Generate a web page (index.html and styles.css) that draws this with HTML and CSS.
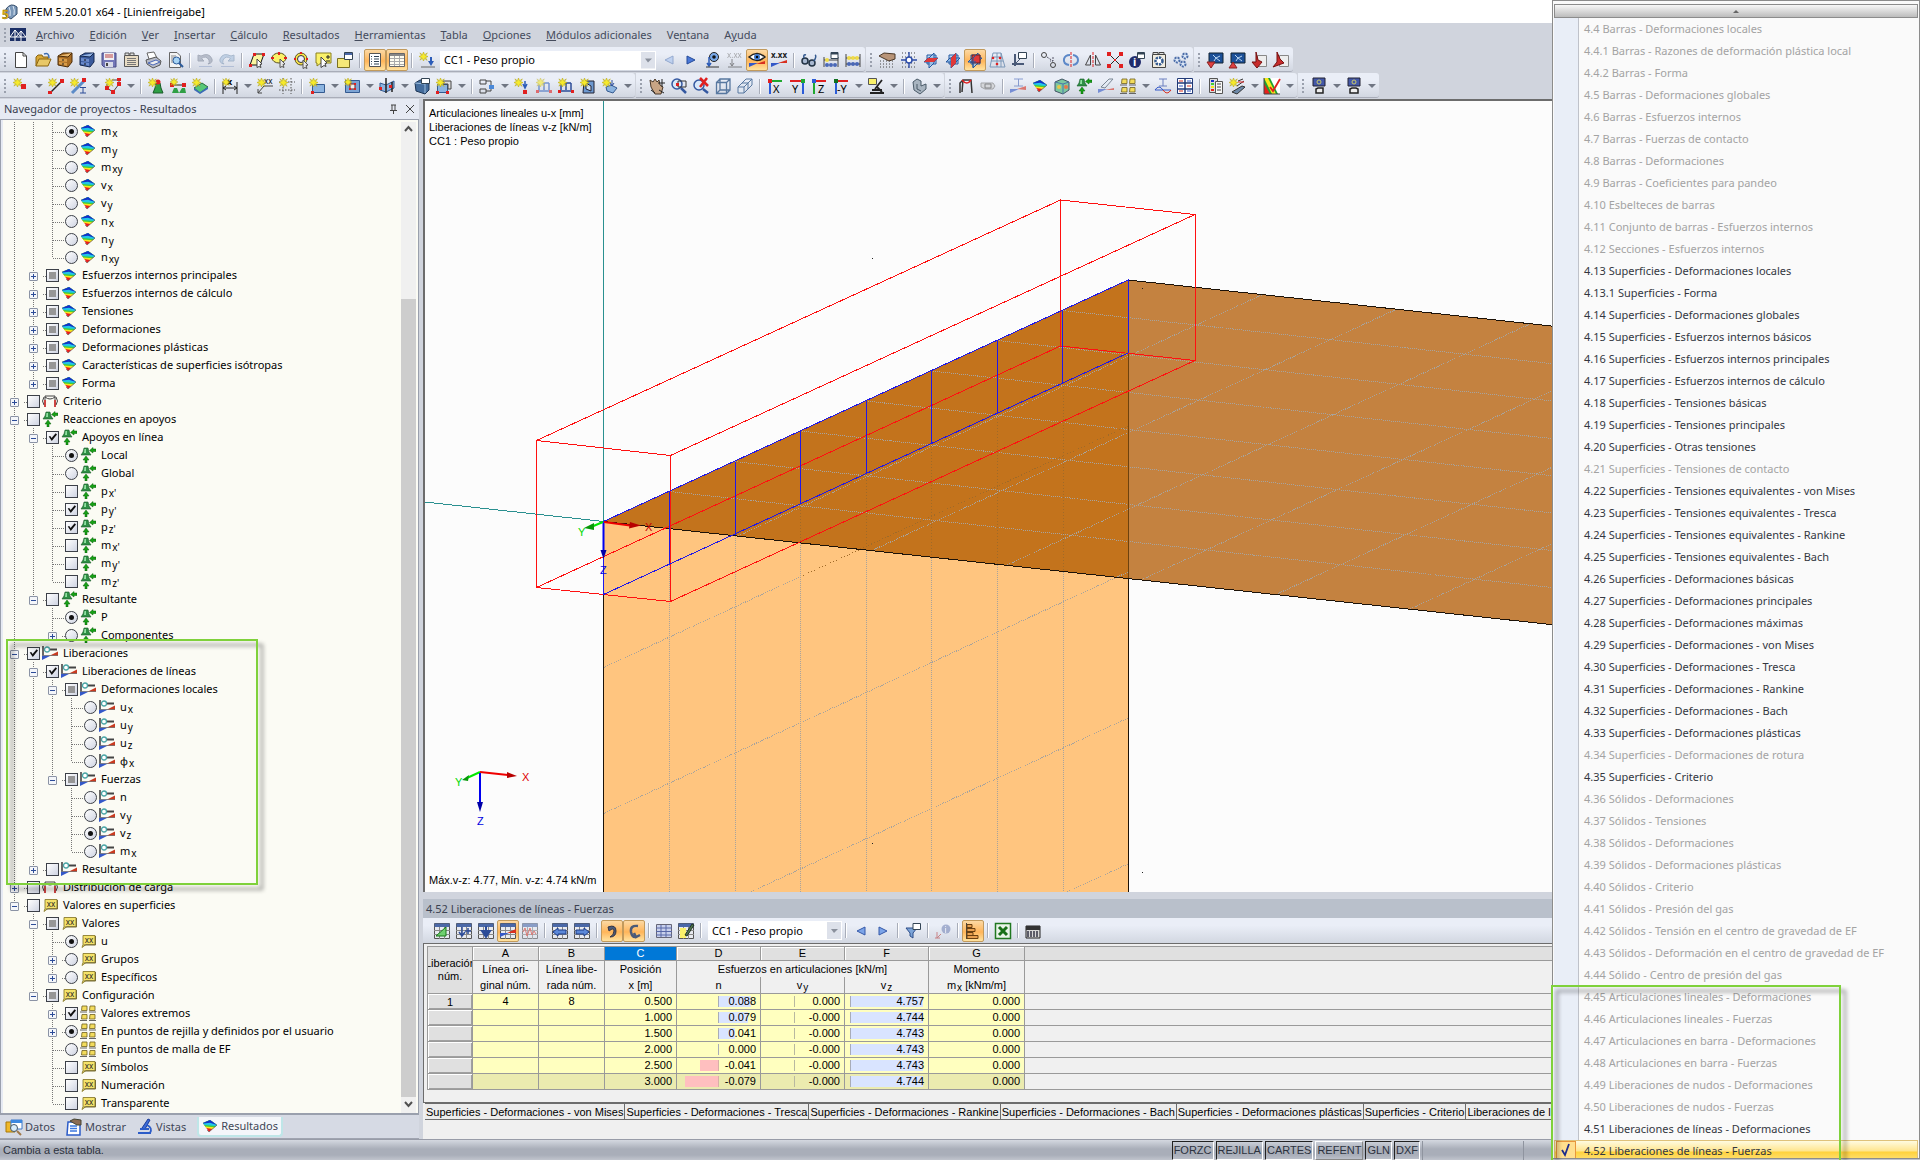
FILE: index.html
```html
<!DOCTYPE html>
<html lang="es">
<head>
<meta charset="utf-8">
<title>RFEM 5.20.01 x64 - [Linienfreigabe]</title>
<link rel="stylesheet" href="styles.css">
</head>
<body>
<svg class="defs" aria-hidden="true">
  <symbol id="star" viewBox="0 0 8 8"><path d="M4 0L5 2.4 7.4 .8 5.8 3.2 8 4 5.8 5 7.2 7.4 5 5.8 4 8 3 5.8 .8 7.2 2.2 5 0 4 2.2 3 .8 .8 3 2.4z" fill="#f6ea2c" stroke="#b5a51a" stroke-width=".5"/></symbol>
  <symbol id="surf" viewBox="0 0 16 14"><path d="M1 4L8 1 15 6 7 13z" fill="#e8201c"/><path d="M1 4L8 1 15 6 10.500 10 4.200 9z" fill="#f8e71c"/><path d="M1 4L8 1 15 6 12.500 8.200 3.200 7.400z" fill="#3ecf3a"/><path d="M1 4L8 1 15 6 14 7 2.300 6z" fill="#21c5e8"/><path d="M1 4L8 1 15 6 8 3.800 1.400 4.600z" fill="#1430c8"/><path d="M5 11L7 13 15 6" fill="none" stroke="#555" stroke-width=".6"/></symbol>
  <symbol id="crit" viewBox="0 0 16 16"><path d="M3 14V3h10v11M3 4q5 4 10 0" class="k"/><path d="M2 4Q-1 8 2 12M14 4q3 4 0 8" class="k"/><path d="M3 7v7M13 7v7" stroke="#e02020" stroke-width="1.400"/></symbol>
  <symbol id="sup" viewBox="0 0 16 16"><path d="M4 1h4l1 4 2 3H1l2-3z" fill="#2f8f45" stroke="#1a5a2a" stroke-width=".6"/><path d="M4.500 2h1.500v4H4z" fill="#8fe0a0"/><path d="M5 16v-3H3l3-4 3 4H7v3zM16 2h-3V.5L9.500 3.500 13 6V4.500h3z" fill="#16a016" stroke="#0a600a" stroke-width=".5"/></symbol>
  <symbol id="lib" viewBox="0 0 16 16"><path d="M1 1v10" stroke="#444" stroke-width="1.600"/><path d="M8 4.500h7" stroke="#444" stroke-width="2"/><circle cx="5" cy="4.500" r="2.500" fill="#fff" stroke="#4aa5a5" stroke-width="1.300"/><path d="M0 10.500h9L0 15z" fill="#3458c8"/><path d="M7 11l9-4.500V11z" fill="#c83a20"/><path d="M0 10.500h16" stroke="#777" stroke-width=".8"/></symbol>
  <symbol id="val" viewBox="0 0 16 16"><path d="M3 2.500h12v9H6l-4 3 1-3z" fill="#f5e36a" stroke="#8b7d30" stroke-width=".9"/><path d="M3.500 12H15.500V3" fill="none" stroke="#776c35"/><text x="9" y="9.500" font-size="8" text-anchor="middle" fill="#222">xx</text></symbol>
  <symbol id="ext" viewBox="0 0 16 16"><g fill="#f3dc5c" stroke="#6e5f20" stroke-width=".8"><path d="M2 1h5v4.500H1.500z"/><path d="M10 1h5v4.500H9.500z"/><path d="M2 9.500h5V14H1.500z"/><path d="M10 9.500h5V14H9.500z"/></g><path d="M0 7h7M9 7h7M0 15.500h7M9 15.500h7" stroke="#666"/></symbol>
  <symbol id="grid" viewBox="0 0 16 16"><path d="M.5.500h15v15H.5z" fill="#e8eaf0" stroke="#555"/><path d="M.5.500h15V4H.5z" fill="#4a68a8"/><path d="M5.500 4v12M10.500 4v12M0 7.500h16M0 11.500h16" stroke="#888"/></symbol>
  <symbol id="planes" viewBox="0 0 16 16"><path d="M4 3h9v9H4z" fill="#bcd8f4" stroke="#2458a0"/><path d="M1 10l4-4h10l-4 4z" fill="#8ebcec" stroke="#2458a0"/><path d="M6 16V6l5-5v10z" fill="#a8ccf0" fill-opacity=".7" stroke="#2458a0"/></symbol>
</svg>

<div class="app">
  <header class="title">
    <svg class="i"><path d="M4 5Q9-2 15 3v7l-6 5-5-3z" fill="#7a97b8" stroke="#37506e"/><path d="M7 3q2 4 1 9M11 2q2 4 1 9" fill="none" stroke="#dce8f4"/><text x="0" y="15" font-size="12" font-weight="bold" fill="#e8b818" stroke="#7d6000" stroke-width=".4">5</text></svg>
    <h1>RFEM 5.20.01 x64 - [Linienfreigabe]</h1>
  </header>

  <nav class="menu">
    <span class="grip"></span>
    <svg class="i"><path d="M0 0h16v13H0z" fill="#1c2f66"/><path d="M0 9h16M5 13V2L0 9M5 2l6 7M11 13V3L6 9M11 3l5 6" fill="none" stroke="#fff"/></svg>
    <a href="#"><u>A</u>rchivo</a><a href="#"><u>E</u>dición</a><a href="#"><u>V</u>er</a><a href="#"><u>I</u>nsertar</a><a href="#"><u>C</u>álculo</a><a href="#"><u>R</u>esultados</a><a href="#"><u>H</u>erramientas</a><a href="#"><u>T</u>abla</a><a href="#"><u>O</u>pciones</a><a href="#"><u>M</u>ódulos adicionales</a><a href="#">Ve<u>n</u>tana</a><a href="#">A<u>y</u>uda</a>
  </nav>

  <div class="bars">
    <div class="barrow">
      <div class="bar"><span class="grip"></span>
        <button><svg><path d="M2.500.500H10L13.500 4v11.500h-11z" fill="#fff" stroke="#444"/><path d="M10 .5V4h3.500" class="k"/></svg></button>
        <button><svg><path d="M1 14V5l2-2h4l1 2h5v3" fill="#d8a838" stroke="#8a6410"/><path d="M1 14l3-7h12l-3 7z" fill="#e8c868" stroke="#8a6410"/><path d="M9 2q5-2 5 4" fill="none" stroke="#3c6cb0" stroke-width="1.500"/></svg></button>
        <button><svg><path d="M1 4l5-3h9v9l-4 5-10-2z" fill="#a86c24" stroke="#4c2c08"/><path d="M1 4l10 1 4-4" fill="#e8b870" stroke="#4c2c08"/><path d="M2 6l8 1v3L2 9zM2 10l8 1v3l-8-2z" fill="#d89c48"/><path d="M5 8h2M5 12h2" stroke="#222"/></svg></button>
        <button><svg><path d="M1 4l5-3h9v9l-4 5-10-2z" fill="#3a5a9c" stroke="#142850"/><path d="M1 4l10 1 4-4" fill="#94b4e4" stroke="#142850"/><path d="M2 6l8 1v3L2 9zM2 10l8 1v3l-8-2z" fill="#6c8ccc"/><path d="M5 8h2M5 12h2" stroke="#111"/></svg></button>
        <button><svg><path d="M1 1h14v14H3l-2-2z" fill="#7478b8" stroke="#4a4c88"/><path d="M3 1h10v7H3z" fill="#f0f0f4"/><path d="M4 10h8v5H4z" fill="#d8dae8"/><path d="M5 11h2v3H5z" fill="#444"/><path d="M4 3h8M4 5h8" stroke="#b44"/></svg></button>
        <button><svg><path d="M1.500 3.500h14v11h-14z" fill="#e8dcc4" stroke="#555"/><path d="M2 3V1h4v2M7 3V1h4v2" fill="#ddd" stroke="#555"/><path d="M4 6.500h9M4 8.500h9M4 10.500h9M4 12.500h9" stroke="#777"/></svg></button>
        <button><svg><path d="M4 7L2 1l7-1 3 6" fill="#fff" stroke="#666"/><path d="M1 8l10-3 5 4-1 4-7 3-6-4z" fill="#b8bcc8" stroke="#555"/><path d="M3 11l8-3 4 2-7 3z" fill="#eee" stroke="#4a68b8"/></svg></button>
        <button><svg><path d="M2.500.500H10L13.500 4v11.500h-11z" fill="#f4f4f4" stroke="#666"/><path d="M4 4h5M4 6h4M4 8h3M4 10h3" stroke="#888"/><circle cx="9.500" cy="8.500" r="3.500" fill="#a8d4f4" stroke="#2c5c9c"/><path d="M12 11l4 4" stroke="#2c5c9c" stroke-width="2"/></svg></button>
        <i class="sep"></i>
        <button><svg class="dim"><path d="M1 3v6h6L4.500 6.500Q9 3 12 8q1 3-1 4 5-1 4-5Q12 0 4 4z" fill="#98a0b0" stroke="#7c8496"/><path d="M2 14.500h13" stroke="#9ac"/></svg></button>
        <button><svg class="dim"><path d="M15 3v6H9l2.500-2.500Q7 3 4 8q-1 3 1 4-5-1-4-5Q4 0 12 4z" fill="#a8c0dc" stroke="#8098b4"/><path d="M2 14.500h13" stroke="#9ac"/></svg></button>
        <i class="sep"></i>
        <button><svg><path d="M1 13L5 2h10l-4 11z" fill="#fbf6a0" stroke="#111"/><path d="M0 12h3v3H0zM4 1h3v3H4zM13 1h3v3h-3z" fill="#e02020"/><path d="M8 7l5 5-2 .5 1 3-2-1-2 1z" fill="#fff" stroke="#444"/></svg></button>
        <button><svg><ellipse cx="8" cy="6" rx="7" ry="5" fill="#fbf26a" stroke="#5a5220"/><path d="M0 6h3M13 6h3M8 0v3" stroke="#e02020" stroke-width="2"/><path d="M9 7l5 5-2 .5 1 3-2-1-2 1z" fill="#e8e8e8" stroke="#555"/></svg></button>
        <button><svg><circle cx="8" cy="7" r="6" fill="#fbe64a" stroke="#5a5220"/><circle cx="8" cy="7" r="3.500" fill="#eef" stroke="#333"/><path d="M7 0h2v2H7zM1 6h2v2H1zM13 6h2v2h-2z" fill="#e02020"/><path d="M10 8l5 5-2 .5 1 3-2-1-2 1z" fill="#e8e8e8" stroke="#555"/></svg></button>
        <button><svg><path d="M1 1h15v10H6l-4 3V11H1z" fill="#fbf26a" stroke="#8a8020"/><path d="M6 5l6 6-2 .5 1 3-2-1-3 2z" fill="#fff" stroke="#444"/><path d="M11 5h4M13 3v4M11 9h4" stroke="#222"/></svg></button>
        <button><svg><path d="M.5 6.500h12v9H.5z" fill="#f5e878" stroke="#7a7020"/><path d="M7.500.500h8v7h-8z" fill="#fff" stroke="#345"/><path d="M8 1h7v2H8z" fill="#4a68a8"/></svg></button>
        <i class="sep"></i>
        <button class="on"><svg><path d="M2.500 1.500h11v13h-11z" fill="#fff" stroke="#555"/><path d="M4 4.500h1M7 4.500h5M4 7h1M7 7h5M4 9.500h1M7 9.500h5M4 12h1M7 12h5" stroke="#345"/></svg></button>
        <button class="on"><svg><path d="M.5 1.500h15v13H.5z" fill="#fffdf0" stroke="#666"/><path d="M1 2h14v2H1z" fill="#888"/><path d="M5.500 4v10M10.500 4v10M1 6.500h14M1 9.500h14M1 12.500h14" stroke="#aaa"/></svg></button>
        <i class="sep"></i>
        <button><svg><use href="#star" width="9" height="9"/><path d="M12 5v7" stroke="#2c5cb8" stroke-width="2"/><path d="M9 9l3 5 3-5z" fill="#2c5cb8"/><path d="M2 15h14" stroke="#666"/></svg></button>
        <label class="combo wide"><select aria-label="Caso de carga"><option>CC1 - Peso propio</option></select></label>
        <button><svg class="dim"><path d="M12 4v8L4 8z" fill="#a8c4f0" stroke="#6080b8"/></svg></button>
        <button><svg><path d="M4 4v8l8-4z" fill="#4a78d8" stroke="#244a98"/></svg></button>
        <button><svg><circle cx="9" cy="5" r="4.500" fill="#78a8e8" stroke="#222"/><circle cx="9" cy="5" r="1.800" fill="#111"/><path d="M4 5v9M2 11l2 3 2-3" stroke="#2c5cb8" stroke-width="1.500" fill="none"/><path d="M1 15h13" stroke="#333"/></svg></button>
        <button><svg class="dim"><text x="0" y="6" font-size="8" fill="#777">x.xx</text><path d="M5 7v7M3 11l2 3 2-3M1 15h14" class="k"/></svg></button>
        <button class="on"><svg><path d="M0 5q8-7 16 0-8 7-16 0z" fill="#fff" stroke="#222" stroke-width="1.500"/><circle cx="8" cy="5" r="3" fill="#3c78d0"/><circle cx="8" cy="5" r="1.200"/><path d="M0 11h9L0 15z" fill="#3458c8"/><path d="M7 12l9-3v3z" fill="#d83020"/></svg></button>
        <button><svg><text x="0" y="6" font-size="8" font-weight="bold" fill="#222">x.xx</text><path d="M0 11h9L0 15z" fill="#3458c8"/><path d="M7 11l9-3v3z" fill="#d83020"/></svg></button>
        <i class="sep"></i>
        <button><svg><circle cx="4" cy="9" r="3" fill="#a8b8d0" stroke="#234" stroke-width="1.500"/><circle cx="11" cy="11" r="3" fill="#a8b8d0" stroke="#234" stroke-width="1.500"/><path d="M3 6q-1-4 2-3M13 9q3-5 1-6" stroke="#345a90" stroke-width="1.500" fill="none"/></svg></button>
        <button><svg><path d="M1 5v10M15 5v10M1 8h14" class="k"/><circle cx="4" cy="8" r="2" fill="#f0dc48"/><circle cx="4" cy="13" r="2" fill="#4a68b8"/><circle cx="8" cy="13" r="2" fill="#4a68b8"/><circle cx="12" cy="13" r="2" fill="#4a68b8"/><path d="M8 .5h7v6H8z" fill="#fff" stroke="#345"/><path d="M8 1h7v1.500H8z" fill="#345"/></svg></button>
        <button><svg><path d="M1 2v13M15 2v13M1 6h14M1 12h14" class="k"/><circle cx="4" cy="6" r="2" fill="#f0dc48"/><circle cx="8" cy="6" r="2" fill="#f0dc48"/><circle cx="12" cy="6" r="2" fill="#f0dc48"/><circle cx="4" cy="12" r="2" fill="#4a68b8"/><circle cx="8" cy="12" r="2" fill="#4a68b8"/><circle cx="12" cy="12" r="2" fill="#4a68b8"/></svg></button>
      </div>
      <div class="bar"><span class="grip"></span>
        <button><svg><path d="M0 4l5-3 11 1v5l-6 2z" fill="#b89478" stroke="#4a3828"/><path d="M1 9h15M1 12h15M1 15h15" stroke="#444" stroke-dasharray="1 2"/></svg></button>
        <button><svg><path d="M1 1h15M1 5h15M1 11h15M1 15h15" stroke="#444" stroke-dasharray="1 2"/><circle cx="8" cy="8" r="3" fill="#fff" stroke="#2c4ca8" stroke-width="1.500"/><path d="M8 0v5M8 11v5M0 8h5M11 8h5" stroke="#2c4ca8" stroke-width="1.400"/></svg></button>
        <button><svg><use href="#planes"/><path d="M1 10l4-4h10l-4 4z" fill="#e03838"/></svg></button>
        <button><svg><use href="#planes"/><path d="M6 16V6l5-5v10z" fill="#e03838"/></svg></button>
        <button class="on"><svg><use href="#planes"/><path d="M5 3h8v8H5z" fill="#e03838" stroke="#622"/><path d="M3 10h6M6 15V6l3-3" fill="none" stroke="#2458a0"/></svg></button>
        <button><svg><path d="M4 1l8 0 4 14H1zM8 1v14M12 1v14M3 5h10M2 9h12" fill="none" stroke="#7c98b8"/><circle cx="4" cy="6" r="1.300" fill="#e02020"/><circle cx="11" cy="6" r="1.300" fill="#e02020"/><circle cx="8" cy="12" r="1.300" fill="#e02020"/></svg></button>
        <button><svg><path d="M4 2v12M1 12h12" stroke="#4a5a78" stroke-width="2"/><path d="M4 12l7-7" stroke="#4a5a78"/><path d="M7.500.500h8v6h-8z" fill="#fff" stroke="#345"/></svg></button>
        <i class="sep"></i>
        <button><svg><circle cx="3" cy="3" r="2.500" class="k"/><circle cx="12" cy="13" r="2.500" class="k"/><path d="M6 5l6 4M12 5v4H9" stroke="#556" stroke-dasharray="2 1" fill="none"/></svg></button>
        <button><svg><path d="M8 0v16" stroke="#e02020" stroke-dasharray="3 1"/><path d="M6 13Q0 12 1 7q1-4 6-4M10 3q5 1 5 5t-5 5" fill="none" stroke="#5c88c8" stroke-width="2"/></svg></button>
        <button><svg><path d="M8 0v16" stroke="#e02020" stroke-dasharray="3 1"/><path d="M5.500 3v10h-5zM10.500 3v10h5z" class="k"/></svg></button>
        <button><svg><path d="M2 2l12 12M14 2L2 14" stroke="#222"/><path d="M0 0h4v4H0zM12 0h4v4h-4zM0 12h4v4H0zM12 12h4v4h-4zM7 7h2v2H7z" fill="#e02020"/></svg></button>
        <button><svg><circle cx="6" cy="10" r="6" fill="#202c6c"/><text x="4" y="14" font-size="11" font-weight="bold" fill="#fff">i</text><path d="M8.500.500h7v6h-7z" fill="#fff" stroke="#345"/><path d="M9 1h6v1.500H9z" fill="#345"/></svg></button>
        <button><svg><path d="M1.500 2.500h13v13h-13z" fill="#f0ece0" stroke="#444"/><path d="M2 2V.5h5V2M8 2V.5h5V2" fill="#ddd" stroke="#444"/><circle cx="8" cy="9" r="3.500" fill="#fff" stroke="#345a90" stroke-width="2.500" stroke-dasharray="2.200 1"/></svg></button>
        <button><svg><g fill="#dce8f8" stroke="#4a6ca8" stroke-width="2" stroke-dasharray="2 1"><circle cx="4" cy="8" r="2.500"/><circle cx="12" cy="4" r="2.500"/><circle cx="10" cy="12" r="2.500"/></g></svg></button>
      </div>
      <div class="bar"><span class="grip"></span>
        <button><svg><path d="M2 1h14v10H2z" fill="#1c5098" stroke="#123"/><path d="M6 3l3 3 4-2M7 9l2-3 4 3" fill="none" stroke="#bcd8f4"/><path d="M0 10h8l-4 6z" fill="#e04040" stroke="#822"/></svg></button>
        <button><svg><path d="M2 1h14v10H2z" fill="#1c5098" stroke="#123"/><path d="M6 3l3 3 4-2M7 9l2-3 4 3" fill="none" stroke="#bcd8f4"/><path d="M0 16h8l-4-6z" fill="#e04040" stroke="#822"/></svg></button>
        <button><svg><path d="M6.500 3.500h9v11h-9z" fill="#eee" stroke="#888"/><path d="M5 0v10H1l5 6 5-6-4-2z" fill="#c82c2c" stroke="#711"/></svg></button>
        <button><svg><path d="M6.500 3.500h9v11h-9z" fill="#eee" stroke="#888"/><path d="M4 0v10l-4 5 11-4-4-4z" fill="#c82c2c" stroke="#711"/></svg></button>
      </div>
    </div>
    <div class="barrow">
      <div class="bar"><span class="grip"></span>
        <button><svg><use href="#star" width="9" height="9"/><path d="M8 6h5v5H8z" fill="#e02020"/></svg></button><button class="dd"></button>
        <button><svg><path d="M2 15L14 3" stroke="#222" stroke-width="1.500"/><path d="M12 1h4v4h-4zM0 13h4v3H0z" fill="#e02020"/><use href="#star" width="9" height="9"/></svg></button>
        <button><svg><path d="M2 15L14 3" stroke="#5c8cc8" stroke-width="3"/><path d="M12 0h4v4h-4z" fill="#e02020"/><use href="#star" width="9" height="9"/><path d="M10 9.500h6M13 10v5M10 15h6" stroke="#2c4c98"/></svg></button><button class="dd"></button>
        <button><svg><path d="M2 6v4l6 4 6-8V2H7" class="k"/><path d="M0 8h4v4H0zM6 12h4v4H6zM12 4h4v4h-4zM12 0h4v3h-4z" fill="#e02020"/><use href="#star" width="9" height="9"/></svg></button><button class="dd"></button><i class="sep"></i>
        <button><svg><path d="M8 5h4l1 5 2 5H5l2-5z" fill="#2f9f45" stroke="#1a5a2a"/><circle cx="10" cy="4" r="2.500" fill="#e02020"/><use href="#star" width="9" height="9"/></svg></button>
        <button><svg><path d="M2 7h12" stroke="#222"/><path d="M0 5h4v4H0zM12 5h4v4h-4z" fill="#e02020"/><path d="M4 10h3l2 5H2zM12 10h3l1 5H9z" fill="#2f9f45"/><use href="#star" width="8" height="8"/></svg></button>
        <button><svg><path d="M2 10l8-5 6 4-8 6z" fill="#58c878" stroke="#2a6c3c"/><path d="M2 10v2l6 4v-2zM8 14v2l8-5V9z" fill="#3c6cb8"/><use href="#star" width="9" height="9"/></svg></button><i class="sep"></i>
        <button><svg><path d="M1 4v12M15 4v12M1 10h14M4 8l-3 2 3 2M12 8l3 2-3 2" stroke="#222" fill="none"/><text x="5" y="7" font-size="9" font-weight="bold">x</text><use href="#star" width="8" height="8"/></svg></button><button class="dd"></button>
        <button><svg><path d="M1 15l6-7h9M1 15v-4M1 15h4" class="k"/><text x="7" y="6" font-size="8">xx</text><use href="#star" width="9" height="9"/></svg></button>
        <button><svg><path d="M4 0v16M12 0v16M0 4h16M0 12h16" stroke="#555" stroke-dasharray="1.500 1.500"/><use href="#star" width="9" height="9"/></svg></button><i class="sep"></i>
        <button><svg><path d="M3.500 6.500h12v8h-12z" fill="#8cb4e0" stroke="#345a90"/><path d="M2 13h3v3H2z" fill="#e02020"/><use href="#star" width="9" height="9"/></svg></button><button class="dd"></button>
        <button><svg><path d="M1.500 2.500h14v12h-14z" fill="#7ca4d4" stroke="#345a90"/><path d="M6 6h5v5H6z" fill="#eee" stroke="#622"/><path d="M5 5h2v2H5zM10 5h2v2h-2zM5 10h2v2H5zM10 10h2v2h-2z" fill="#e02020"/><use href="#star" width="8" height="8"/></svg></button><button class="dd"></button>
        <button><svg><path d="M1 5l6 2 8-4v7l-8 4-6-2z" fill="#8cb4e0" stroke="#345a90"/><path d="M7 0v15M13 4v10" stroke="#222" stroke-width="1.500"/><path d="M0 9h3v3H0zM10 7h3v3h-3z" fill="#e02020"/></svg></button><button class="dd"></button>
        <button><svg><path d="M1 5l5-3h9v10l-4 4-9-3z" fill="#446c9c" stroke="#1c3454"/><path d="M1 5l10 1v9" fill="none" stroke="#9cbcdc"/><path d="M7.500.500h8v5h-8z" fill="#fff" stroke="#345"/></svg></button>
        <button><svg><path d="M1.500 6.500h10v8h-10z" fill="#8cb4e0" stroke="#345a90"/><path d="M7 3h8v8h-3V6H7z" fill="#ddd" stroke="#444"/><path d="M0 13h3v3H0zM10 13h3v3h-3z" fill="#e02020"/><use href="#star" width="9" height="9"/></svg></button><button class="dd"></button><i class="sep"></i>
        <button><svg><path d="M1 2h6v4H1zM1 11h6v4H1z" class="k"/><path d="M7 3h5v4M7 13h5v-3" class="k"/><path d="M10 7h5v4h-5z" fill="#4a88d8"/></svg></button><button class="dd"></button>
        <button><svg><path d="M11 3v6M9 6l2 4 2-4" stroke="#2c5cb8" stroke-width="1.500" fill="none"/><path d="M9 12h4v4H9z" fill="#e02020"/><use href="#star" width="9" height="9"/></svg></button>
        <button><svg class="dim"><path d="M1 13h14M3 5v7M8 5v7M13 5v7M3 5h10" stroke="#2c5cb8" fill="none" stroke-width="1.500"/><path d="M0 12h3v3H0zM13 12h3v3h-3z" fill="#e02020"/><use href="#star" width="9" height="9"/></svg></button>
        <button><svg><path d="M1 13h14M3 5v7M8 5v7M13 5v7M3 5h10" stroke="#2c4c98" fill="none" stroke-width="1.500"/><path d="M0 12h3v3H0zM13 12h3v3h-3z" fill="#e02020"/><use href="#star" width="9" height="9"/></svg></button>
        <button><svg><path d="M4 3h10v12H3z" fill="#6c98d0" stroke="#223"/><path d="M6 5l5 3v5l-5-2z" fill="#cfe0f4" stroke="#223"/><use href="#star" width="9" height="9"/></svg></button>
        <button><svg><path d="M4 9l5-2 6 3-4 5-6-2z" fill="#8cb4e0" stroke="#345a90"/><path d="M10 2v5M8 5l2 3 2-3" stroke="#2c4c98" fill="none"/><use href="#star" width="9" height="9"/></svg></button><button class="dd"></button>
      </div>
      <div class="bar"><span class="grip"></span>
        <button><svg><path d="M1 2l3 2 2-3 2 3 2-2 1 5 3 2-2 7H6L2 9z" fill="#c8a484" stroke="#4a3828"/><path d="M13 1v8M9 5h7M2 12l4 3M10 12l5 3" stroke="#222"/></svg></button>
        <button><svg><circle cx="6" cy="6" r="5" fill="#d8e8fa" stroke="#3458a0" stroke-width="1.500"/><path d="M10 10l5 5" stroke="#3458a0" stroke-width="2.500"/><path d="M7 3h8v6H7z" fill="none" stroke="#333"/><path d="M5 5h3v3H5z" fill="#e02020"/></svg></button>
        <button><svg><circle cx="6" cy="7" r="5" fill="#d8e8fa" stroke="#3458a0" stroke-width="1.500"/><path d="M10 11l5 4" stroke="#3458a0" stroke-width="2.500"/><path d="M7 0l8 8M14 0L7 9" stroke="#e02020" stroke-width="2.500"/></svg></button>
        <button><svg><path d="M1.500 4.500h10v11h-10zM5 1h10v11H5zM1.500 4.500L5 1M11.500 4.500L15 1M11.500 15.500L15 12M1.500 15.500L5 12" fill="none" stroke="#5878a0" stroke-width="1.300"/></svg></button>
        <button><svg><path d="M1 9h6v6H1zM5 5h6v6M9 1h6v6M1 9l8-8M7 9l8-8M7 15l8-8" fill="#e4ecf6" fill-opacity=".6" stroke="#5878a0"/></svg></button><i class="sep"></i>
        <button><svg><path d="M3 3v13" stroke="#2c5cd8" stroke-width="2"/><path d="M3 3h12" stroke="#20a830" stroke-width="2"/><path d="M1 1h4v4H1z" fill="#e02020"/><text x="6" y="15" font-size="11">X</text></svg></button>
        <button><svg><path d="M14 3v13" stroke="#2c5cd8" stroke-width="2"/><path d="M1 3h12" stroke="#e02020" stroke-width="2"/><path d="M12 1h4v4h-4z" fill="#20a830"/><text x="3" y="15" font-size="11">Y</text></svg></button>
        <button><svg><path d="M3 3v13" stroke="#20a830" stroke-width="2"/><path d="M3 3h12" stroke="#e02020" stroke-width="2"/><path d="M1 1h4v4H1z" fill="#2c5cd8"/><text x="7" y="15" font-size="11">Z</text></svg></button>
        <button><svg><path d="M3 3v13" stroke="#2c5cd8" stroke-width="2"/><path d="M3 3h12" stroke="#e02020" stroke-width="2"/><path d="M1 1h4v4H1z" fill="#107020"/><text x="4" y="15" font-size="11">-Y</text></svg></button><button class="dd"></button>
        <button><svg><path d="M.5.500h8v6h-8z" fill="#fbf26a" stroke="#555"/><path d="M14 2L7 11M4 12h10M9 9l5 5M2 15h14" stroke="#222" stroke-width="1.800"/></svg></button><button class="dd"></button><i class="sep"></i>
        <button><svg><path d="M2 4l4-3 4 2v5l5-2v5l-6 5-6-4z" fill="#a8b4c0" stroke="#4a5a68"/><path d="M6 6v5l4 2" fill="none" stroke="#4a5a68"/></svg></button><button class="dd"></button>
      </div>
      <div class="bar"><span class="grip"></span>
        <button><svg><path d="M2 15V5L5 2h8l1 13M5 2L4 14" fill="none" stroke="#333" stroke-width="1.500"/><path d="M4 2q5 6 9 0" fill="none" stroke="#e02020" stroke-width="1.500"/></svg></button>
        <button><svg class="dim"><path d="M1 5h12l2 3-2 3H5L1 9z" fill="#ccc" stroke="#777"/><path d="M5 6h6v4H5z" class="k"/></svg></button><i class="sep"></i>
        <button><svg class="dim"><path d="M4 1h9M8.500 1v7M4 8h9" stroke="#4a68b8"/><path d="M0 11h9L0 15z" fill="#3458c8"/><path d="M7 11l9-3v4z" fill="#d83020"/></svg></button>
        <button><svg><use href="#surf" y="1" width="16" height="14"/></svg></button>
        <button><svg><path d="M1 4l7-3 7 3v8l-6 4-8-3z" fill="#7cc8a0" stroke="#456"/><path d="M1 4l8 2 6-2M9 6v10" fill="none" stroke="#4a78a8"/><circle cx="5" cy="9" r="2" fill="#e8c848"/><circle cx="12" cy="9" r="2" fill="#e87848"/></svg></button>
        <button><svg><use href="#sup"/></svg></button>
        <button><svg class="dim"><path d="M3 9l8-8h4l-8 9z" fill="#e4ecf6" stroke="#345"/><path d="M0 11h9L0 15z" fill="#3458c8"/><path d="M7 12l9-2v2z" fill="#d83020"/></svg></button>
        <button><svg><use href="#ext"/></svg></button><button class="dd"></button>
        <button><svg><path d="M4 1h8M8 1v7M4 8h8" stroke="#6c80c0"/><path d="M0 12h16M0 12q4-6 8 0" fill="none" stroke="#3458c8"/><path d="M8 12q4 6 8 0" fill="none" stroke="#d83020"/></svg></button>
        <button><svg><path d="M.5.500h15v15H.5z" fill="#fff" stroke="#223a78"/><path d="M8 0v16M0 5h16M0 11h16" stroke="#223a78" stroke-width="1.500"/><path d="M2 3h4M10 8h4M2 13h4" stroke="#d83020"/><path d="M10 3h4M2 8h4M10 13h4" stroke="#3458c8"/></svg></button><i class="sep"></i>
        <button><svg><path d="M2.500.500h8v14h-8z" fill="#ddd" stroke="#555"/><path d="M4 3h3" stroke="#1430c8" stroke-width="2"/><path d="M4 6h3" stroke="#3ecf3a" stroke-width="2"/><path d="M4 9h3" stroke="#f8e71c" stroke-width="2"/><path d="M4 12h3" stroke="#e8201c" stroke-width="2"/><path d="M8.500 3.500h7v12h-7z" fill="#f8f8f8" stroke="#555"/><path d="M10 6h4M10 9h4M10 12h4" class="k"/></svg></button>
        <button><svg><path d="M3 14l10-6 3 1-8 7zM9 3l5-2M8 8l7-5" fill="#6c88a8" stroke="#333"/><path d="M9 4l6 0" stroke="#e02020"/><use href="#star" width="9" height="9"/></svg></button><button class="dd"></button>
        <button><svg><path d="M0 0h16v16H0z" fill="#fff"/><path d="M0 0h6l8 16H0z" fill="#20a030"/><path d="M0 0h4l8 16H8z" fill="#f8e71c"/><path d="M0 5l6 11H0z" fill="#e8201c"/><path d="M0 0v16h16" class="k"/><path d="M6 9l3 4 7-12" fill="none" stroke="#e02020" stroke-width="1.800"/></svg></button><button class="dd"></button>
      </div>
      <div class="bar"><span class="grip"></span>
        <button><svg><path d="M2 0h12v8H2z" fill="#4458a8" stroke="#223"/><circle cx="8" cy="4" r="2" fill="none" stroke="#cc6"/><path d="M5 15v-4l2-1h5v5z" fill="#eee" stroke="#222" stroke-width="1.500"/></svg></button><button class="dd"></button>
        <button><svg><path d="M2 0h12v8H2z" fill="#4458a8" stroke="#223"/><circle cx="8" cy="4" r="2" fill="none" stroke="#cc6"/><path d="M4 15v-4l2-1h4l2 1v4z" fill="#eee" stroke="#222" stroke-width="1.500"/></svg></button><button class="dd"></button>
      </div>
    </div>
  </div>

  <main>
    <aside class="nav">
      <h2>Navegador de proyectos - Resultados<span class="tools"><svg><path d="M3 2h5M4 2v5M7 2v5M2 7.500h7M5.500 8v3" class="k"/></svg><svg><path d="M2 2l8 8M10 2l-8 8" class="k"/></svg></span></h2>
      <div class="treebox">
        <ul class="tree">
          <li><ul>
            <li><ul>
              <li><label><input type="radio" name="s" checked><svg><use href="#surf"/></svg><span>m<sub>x</sub></span></label></li>
              <li><label><input type="radio" name="s"><svg><use href="#surf"/></svg><span>m<sub>y</sub></span></label></li>
              <li><label><input type="radio" name="s"><svg><use href="#surf"/></svg><span>m<sub>xy</sub></span></label></li>
              <li><label><input type="radio" name="s"><svg><use href="#surf"/></svg><span>v<sub>x</sub></span></label></li>
              <li><label><input type="radio" name="s"><svg><use href="#surf"/></svg><span>v<sub>y</sub></span></label></li>
              <li><label><input type="radio" name="s"><svg><use href="#surf"/></svg><span>n<sub>x</sub></span></label></li>
              <li><label><input type="radio" name="s"><svg><use href="#surf"/></svg><span>n<sub>y</sub></span></label></li>
              <li><label><input type="radio" name="s"><svg><use href="#surf"/></svg><span>n<sub>xy</sub></span></label></li>
            </ul></li>
            <li><button class="ex plus"></button><label><input type="checkbox" class="mixed"><svg><use href="#surf"/></svg><span>Esfuerzos internos principales</span></label></li>
            <li><button class="ex plus"></button><label><input type="checkbox" class="mixed"><svg><use href="#surf"/></svg><span>Esfuerzos internos de cálculo</span></label></li>
            <li><button class="ex plus"></button><label><input type="checkbox" class="mixed"><svg><use href="#surf"/></svg><span>Tensiones</span></label></li>
            <li><button class="ex plus"></button><label><input type="checkbox" class="mixed"><svg><use href="#surf"/></svg><span>Deformaciones</span></label></li>
            <li><button class="ex plus"></button><label><input type="checkbox" class="mixed"><svg><use href="#surf"/></svg><span>Deformaciones plásticas</span></label></li>
            <li><button class="ex plus"></button><label><input type="checkbox" class="mixed"><svg><use href="#surf"/></svg><span>Características de superficies isótropas</span></label></li>
            <li><button class="ex plus"></button><label><input type="checkbox" class="mixed"><svg><use href="#surf"/></svg><span>Forma</span></label></li>
          </ul></li>
          <li><button class="ex plus"></button><label><input type="checkbox"><svg><use href="#crit"/></svg><span>Criterio</span></label></li>
          <li><button class="ex"></button><label><input type="checkbox"><svg><use href="#sup"/></svg><span>Reacciones en apoyos</span></label><ul>
            <li><button class="ex"></button><label><input type="checkbox" checked><svg><use href="#sup"/></svg><span>Apoyos en línea</span></label><ul>
              <li><label><input type="radio" name="a" checked><svg><use href="#sup"/></svg><span>Local</span></label></li>
              <li><label><input type="radio" name="a"><svg><use href="#sup"/></svg><span>Global</span></label></li>
              <li><label><input type="checkbox"><svg><use href="#sup"/></svg><span>p<sub>x'</sub></span></label></li>
              <li><label><input type="checkbox" checked><svg><use href="#sup"/></svg><span>p<sub>y'</sub></span></label></li>
              <li><label><input type="checkbox" checked><svg><use href="#sup"/></svg><span>p<sub>z'</sub></span></label></li>
              <li><label><input type="checkbox"><svg><use href="#sup"/></svg><span>m<sub>x'</sub></span></label></li>
              <li><label><input type="checkbox"><svg><use href="#sup"/></svg><span>m<sub>y'</sub></span></label></li>
              <li><label><input type="checkbox"><svg><use href="#sup"/></svg><span>m<sub>z'</sub></span></label></li>
            </ul></li>
            <li><button class="ex"></button><label><input type="checkbox"><svg><use href="#sup"/></svg><span>Resultante</span></label><ul>
              <li><label><input type="radio" name="p" checked><svg><use href="#sup"/></svg><span>P</span></label></li>
              <li><button class="ex plus"></button><label><input type="radio" name="p"><svg><use href="#sup"/></svg><span>Componentes</span></label></li>
            </ul></li>
          </ul></li>
          <li><button class="ex"></button><label><input type="checkbox" checked><svg><use href="#lib"/></svg><span>Liberaciones</span></label><ul>
            <li><button class="ex"></button><label><input type="checkbox" checked><svg><use href="#lib"/></svg><span>Liberaciones de líneas</span></label><ul>
              <li><button class="ex"></button><label><input type="checkbox" class="mixed"><svg><use href="#lib"/></svg><span>Deformaciones locales</span></label><ul>
                <li><label><input type="radio" name="d"><svg><use href="#lib"/></svg><span>u<sub>x</sub></span></label></li>
                <li><label><input type="radio" name="d"><svg><use href="#lib"/></svg><span>u<sub>y</sub></span></label></li>
                <li><label><input type="radio" name="d"><svg><use href="#lib"/></svg><span>u<sub>z</sub></span></label></li>
                <li><label><input type="radio" name="d"><svg><use href="#lib"/></svg><span>φ<sub>x</sub></span></label></li>
              </ul></li>
              <li><button class="ex"></button><label><input type="checkbox" class="mixed"><svg><use href="#lib"/></svg><span>Fuerzas</span></label><ul>
                <li><label><input type="radio" name="f"><svg><use href="#lib"/></svg><span>n</span></label></li>
                <li><label><input type="radio" name="f"><svg><use href="#lib"/></svg><span>v<sub>y</sub></span></label></li>
                <li><label><input type="radio" name="f" checked><svg><use href="#lib"/></svg><span>v<sub>z</sub></span></label></li>
                <li><label><input type="radio" name="f"><svg><use href="#lib"/></svg><span>m<sub>x</sub></span></label></li>
              </ul></li>
            </ul></li>
            <li><button class="ex plus"></button><label><input type="checkbox"><svg><use href="#lib"/></svg><span>Resultante</span></label></li>
          </ul></li>
          <li><button class="ex plus"></button><label><input type="checkbox"><svg><use href="#crit"/></svg><span>Distribución de carga</span></label></li>
          <li><button class="ex"></button><label><input type="checkbox"><svg><use href="#val"/></svg><span>Valores en superficies</span></label><ul>
            <li><button class="ex"></button><label><input type="checkbox" class="mixed"><svg><use href="#val"/></svg><span>Valores</span></label><ul>
              <li><label><input type="radio" name="v" checked><svg><use href="#val"/></svg><span>u</span></label></li>
              <li><button class="ex plus"></button><label><input type="radio" name="v"><svg><use href="#val"/></svg><span>Grupos</span></label></li>
              <li><button class="ex plus"></button><label><input type="radio" name="v"><svg><use href="#val"/></svg><span>Específicos</span></label></li>
            </ul></li>
            <li><button class="ex"></button><label><input type="checkbox" class="mixed"><svg><use href="#val"/></svg><span>Configuración</span></label><ul>
              <li><button class="ex plus"></button><label><input type="checkbox" checked><svg><use href="#ext"/></svg><span>Valores extremos</span></label></li>
              <li><button class="ex plus"></button><label><input type="radio" name="c" checked><svg><use href="#ext"/></svg><span>En puntos de rejilla y definidos por el usuario</span></label></li>
              <li><label><input type="radio" name="c"><svg><use href="#ext"/></svg><span>En puntos de malla de EF</span></label></li>
              <li><label><input type="checkbox"><svg><use href="#val"/></svg><span>Símbolos</span></label></li>
              <li><label><input type="checkbox"><svg><use href="#val"/></svg><span>Numeración</span></label></li>
              <li><label><input type="checkbox"><svg><use href="#val"/></svg><span>Transparente</span></label></li>
            </ul></li>
          </ul></li>
        </ul>
        <div class="scroll"><svg><path d="M4 9l3.500-4L11 9" class="c"/></svg><i></i><svg><path d="M4 5l3.500 4L11 5" class="c"/></svg></div>
        <div class="mark nodes"></div>
      </div>
      <div class="navtabs">
        <button><svg><path d="M0 3h5l1 2h3v8H0z" fill="#f0b828" stroke="#a87808"/><path d="M5 1h11v9H5z" fill="#fff" stroke="#3c78c8"/><path d="M5 1h11v3H5z" fill="#3c88e0"/><circle cx="8" cy="9" r="3.500" fill="#d8ecfa" stroke="#456"/><path d="M11 12l4 4" stroke="#a07848" stroke-width="2"/></svg>Datos</button>
        <button><svg><path d="M2 3h12v13H1z" fill="#fff" stroke="#2c5cc8" stroke-width="1.500"/><path d="M4 7h7M4 9.500h7M4 12h7" stroke="#3c78e0" stroke-width="1.500"/><path d="M4 2l4-2 7 1v5l-4 0z" fill="#8c6c54" stroke="#443"/></svg>Mostrar</button>
        <button><svg><path d="M11 0l2 1-5 9-3-1z" fill="#3c6cd8" stroke="#1c3c98"/><path d="M3 10h9M10 6q6 3 3 8M1 14h13" stroke="#2c5cc8" stroke-width="1.800" fill="none"/></svg>Vistas</button>
        <button class="sel"><svg><use href="#surf"/></svg>Resultados</button>
      </div>
    </aside>

    <section class="work">
      <div class="view">
        <svg class="scene"><g transform="translate(-425 -101)">
          <path d="M603.500 521.500L1128 280V892H603.500z" fill="#ffc57f"/>
          <path d="M1128 280L1928 367V665.500L1128 578.500z" fill="#c48240"/>
          <path d="M603.500 521.500L1128 280V578.500z" fill="#c3731c"/>
          <g class="mesh">
            <path d="M669 491.500L1928 628.500M734.500 461.500L1928 591.500M800 431L1928 554M866 401L1928 516.500M931.500 371L1928 479.500M997 340.500L1928 442M1062.500 310.500L1928 404.500"/>
            <path d="M738 536L1262.500 294.500M872 550.500L1397 309M1007 565L1531 323.500M1141 580L1666 338.500M1276 594.500L1800 353M1410 609L1928 370.500"/>
            <path d="M669.500 529V892M735 536V892M800.500 543V892M866 550V892M931.500 557.500V892M997 564.500V892M1063 571.500V892"/>
            <path d="M603.500 667.500L803 575.500M603.500 813.500L1128 572M731 901L1128 718M1047 901L1128 864"/>
          </g>
          <path d="M669.500 564V529M735 533V536M800.500 504V543M866 474V550M931.500 443V557M997 413V564M1063 383V571M803 575.500L1128 426" fill="none" stroke="#a06a28" stroke-dasharray="1 2"/>
          <g class="edge"><path d="M603.500 521.500L1928 665.500M1128 280L1928 367M603.500 594V892"/><path d="M1128.500 353V578" stroke="#6d420e"/><path d="M1128.500 578V892"/></g>
          <path d="M603.500 101V521M425 502L603.500 521.500" fill="none" stroke="#2a9090"/>
          <path d="M536.500 440.500L670.500 455.500V601.500L536.500 587.500zM1060.500 200L1195 214.500V360.500L1060.500 346zM536.500 440.500L1060.500 200M670.500 455.500L1195 214.500M670.500 601.500L1195 360.500M536.500 587.500L1060.500 346" fill="none" stroke="#ff1010"/>
          <path d="M603.500 521.500L1128 280V353L603.500 594.500zM669.500 491.500V564.500M735 461.500V534.500M800.500 431V504M866 401V474M931.500 371V444M997 340.500V413.500M1062.500 310.500V383.500" fill="none" stroke="#2018e8"/>
          <g class="axis">
            <path d="M604 522l26 3.500" stroke="#f00000"/><path d="M630 522l11 3.500-12 3z" fill="#b80000"/><text x="645" y="531" fill="#c80000">X</text>
            <path d="M603 522l-12 5" stroke="#00e800"/><path d="M594 523l-10 5 10 2z" fill="#089808"/><text x="578" y="536" fill="#00d800">Y</text>
            <path d="M603.500 523v28" stroke="#0000f0"/><path d="M600.500 550h6l-3 9z" fill="#0000a8"/><text x="600" y="574" fill="#0000e0">Z</text>
            <path d="M480 772l28 3" stroke="#f00000"/><path d="M507 772l10 4-10 2z" fill="#b80000"/><text x="522" y="781" fill="#e00000">X</text>
            <path d="M480 772l-13 6" stroke="#00e800"/><path d="M469 775l-7 5 6 1z" fill="#089808"/><text x="455" y="786" fill="#00d800">Y</text>
            <path d="M480 773v30" stroke="#0000f0"/><path d="M477 802h6l-3 10z" fill="#0000a8"/><text x="477" y="825" fill="#0000e0">Z</text>
          </g>
          <path d="M872 258h1M1142 872h1M872 843h1M1142 288h1" stroke="#222"/>
        </g></svg>
        <div class="info"><p>Articulaciones lineales u-x [mm]<br>Liberaciones de líneas v-z [kN/m]<br>CC1 : Peso propio</p><p>Máx.v-z: 4.77, Mín. v-z: 4.74 kN/m</p></div>
      </div>

      <h2>4.52 Liberaciones de líneas - Fuerzas</h2>
      <div class="bar tablebar">
        <button><svg><use href="#grid"/><path d="M2 13h10V4z" fill="#70d070" stroke="#187818"/></svg></button>
        <button><svg><use href="#grid"/><path d="M6 4v8M3 9l3 4 3-4M9 8h6M12 5v6" fill="none" stroke="#2c4c98" stroke-width="1.500"/></svg></button>
        <button><svg><use href="#grid"/><path d="M8 3v7M4 8l4 6 4-6z" fill="#2c4c98" stroke="#2c4c98" stroke-width="2"/></svg></button>
        <button class="on"><svg><use href="#grid"/><path d="M0 10h9L0 14z" fill="#3458c8"/><path d="M7 10l9-4v4z" fill="#d83020"/></svg></button>
        <button><svg class="dim"><use href="#grid"/><path d="M1 9l2-4 2 8 3-8 2 7 2-4 2 3" fill="none" stroke="#d83020"/></svg></button><i class="sep"></i>
        <button><svg><use href="#grid"/><path d="M1 9l5-4v2h8v4H6v2z" fill="#5c88d8" stroke="#1c3c88"/></svg></button>
        <button><svg><use href="#grid"/><path d="M15 9l-5-4v2H2v4h8v2z" fill="#5c88d8" stroke="#1c3c88"/></svg></button><i class="sep"></i>
        <button class="on"><svg><path d="M4 4q8-3 8 4 0 6-6 6 4-2 4-6T5 8z" fill="#4a5a78" stroke="#334"/></svg></button>
        <button class="on"><svg><path d="M12 3q-8-1-7 6 1 5 4 5M8 10l2 4 4-2" fill="none" stroke="#4a5a78" stroke-width="2.500"/></svg></button><i class="sep"></i>
        <button><svg><path d="M.5 1.500h15v13H.5z" fill="#c8d0ec" stroke="#667"/><path d="M0 5h16M0 8.500h16M0 12h16M5 2v12M10 2v12" stroke="#5868a8"/></svg></button>
        <button><svg><use href="#grid"/><path d="M2 15V5h6v10z" fill="#fbf26a"/><path d="M7 12l7-11 2 1-7 11z" fill="#507850" stroke="#232"/></svg></button><i class="sep"></i>
        <label class="combo"><select aria-label="Caso de carga de la tabla"><option>CC1 - Peso propio</option></select></label><i class="sep"></i>
        <button><svg><path d="M12 4v8L4 8z" fill="#7ca4e8" stroke="#3458a8"/></svg></button>
        <button><svg><path d="M4 4v8l8-4z" fill="#7ca4e8" stroke="#3458a8"/></svg></button><i class="sep"></i>
        <button><svg><path d="M1 5h11L8 10v5l-3-2v-3z" fill="#7ca4d8" stroke="#2c4c88"/><path d="M8 .5h7.500v6H8z" fill="#fff" stroke="#345"/></svg></button><i class="sep"></i>
        <button><svg class="dim"><circle cx="11" cy="6" r="4.500" fill="#7888b8"/><text x="9.500" y="10" font-size="9" fill="#fff">i</text><path d="M2 9v6M0 15h5M2 15l4-4" stroke="#b44"/></svg></button><i class="sep"></i>
        <button class="on"><svg><path d="M1.500 0v16" class="k"/><path d="M2 1.500h5v3H2zM2 5.500h8v3H2zM2 9.500h6v3H2zM2 12.500h11v3H2z" fill="#e8a050" stroke="#6a4010"/></svg></button><i class="sep"></i>
        <button><svg><path d="M.5.500h15v15H.5z" fill="#e8f4e8" stroke="#207820" stroke-width="1.500"/><path d="M4 4l8 8M12 4l-8 8" stroke="#187018" stroke-width="3"/></svg></button><i class="sep"></i>
        <button><svg><path d="M1 3h14v12H1z" fill="#d8d8d8" stroke="#222"/><path d="M1 3h14v4H1z" fill="#333"/><path d="M2 9h12M2 11h12M2 13h12" stroke="#334" stroke-dasharray="2 1" stroke-width="1.500"/></svg></button>
      </div>
      <div class="gridbox">
        <table>
          <colgroup><col class="c0"><col class="c1"><col class="c1"><col class="c2"><col class="c3"><col class="c3"><col class="c3"><col class="c4"><col></colgroup>
          <thead>
            <tr class="letters"><th rowspan="3" class="corner">Liberación<br>núm.</th><th>A</th><th>B</th><th class="cur">C</th><th>D</th><th>E</th><th>F</th><th>G</th><th class="fill"></th></tr>
            <tr class="names"><th rowspan="2">Línea ori-<br>ginal núm.</th><th rowspan="2">Línea libe-<br>rada núm.</th><th rowspan="2">Posición<br>x [m]</th><th colspan="3">Esfuerzos en articulaciones [kN/m]</th><th rowspan="2">Momento<br>m<sub>x</sub> [kNm/m]</th><th rowspan="2" class="rest"></th></tr>
            <tr class="names subs"><th>n</th><th>v<sub>y</sub></th><th>v<sub>z</sub></th></tr>
          </thead>
          <tbody>
            <tr><th>1</th><td class="mid">4</td><td class="mid">8</td><td>0.500</td><td class="n" style="--v:32px">0.088</td><td class="vy">0.000</td><td class="vz">4.757</td><td>0.000</td><td></td></tr>
            <tr><th></th><td></td><td></td><td>1.000</td><td class="n" style="--v:29px">0.079</td><td class="vy">-0.000</td><td class="vz">4.744</td><td>0.000</td><td></td></tr>
            <tr><th></th><td></td><td></td><td>1.500</td><td class="n" style="--v:16px">0.041</td><td class="vy">-0.000</td><td class="vz">4.743</td><td>0.000</td><td></td></tr>
            <tr><th></th><td></td><td></td><td>2.000</td><td class="n" style="--v:0px">0.000</td><td class="vy">-0.000</td><td class="vz">4.743</td><td>0.000</td><td></td></tr>
            <tr><th></th><td></td><td></td><td>2.500</td><td class="n neg" style="--v:18px">-0.041</td><td class="vy">-0.000</td><td class="vz">4.743</td><td>0.000</td><td></td></tr>
            <tr class="last"><th></th><td></td><td></td><td>3.000</td><td class="n neg" style="--v:33px">-0.079</td><td class="vy">-0.000</td><td class="vz">4.744</td><td>0.000</td><td></td></tr>
          </tbody>
        </table>
      </div>
      <div class="sheets"><button>Superficies - Deformaciones - von Mises</button><button>Superficies - Deformaciones - Tresca</button><button>Superficies - Deformaciones - Rankine</button><button>Superficies - Deformaciones - Bach</button><button>Superficies - Deformaciones plásticas</button><button>Superficies - Criterio</button><button>Liberaciones de líneas - Deformaciones</button></div>
    </section>
  </main>

  <footer><p>Cambia a esta tabla.</p><div class="modes"><span>FORZC</span><span>REJILLA</span><span>CARTES</span><span class="up">REFENT</span><span>GLN</span><span>DXF</span><i></i></div></footer>

  <div class="popup">
    <button class="more" aria-label="Desplazar arriba"></button>
    <ul>
      <li><button disabled>4.4 Barras - Deformaciones locales</button></li>
      <li><button disabled>4.4.1 Barras - Razones de deformación plástica local</button></li>
      <li><button disabled>4.4.2 Barras - Forma</button></li>
      <li><button disabled>4.5 Barras - Deformaciones globales</button></li>
      <li><button disabled>4.6 Barras - Esfuerzos internos</button></li>
      <li><button disabled>4.7 Barras - Fuerzas de contacto</button></li>
      <li><button disabled>4.8 Barras - Deformaciones</button></li>
      <li><button disabled>4.9 Barras - Coeficientes para pandeo</button></li>
      <li><button disabled>4.10 Esbelteces de barras</button></li>
      <li><button disabled>4.11 Conjunto de barras - Esfuerzos internos</button></li>
      <li><button disabled>4.12 Secciones - Esfuerzos internos</button></li>
      <li><button>4.13 Superficies - Deformaciones locales</button></li>
      <li><button>4.13.1 Superficies - Forma</button></li>
      <li><button>4.14 Superficies - Deformaciones globales</button></li>
      <li><button>4.15 Superficies - Esfuerzos internos básicos</button></li>
      <li><button>4.16 Superficies - Esfuerzos internos principales</button></li>
      <li><button>4.17 Superficies - Esfuerzos internos de cálculo</button></li>
      <li><button>4.18 Superficies - Tensiones básicas</button></li>
      <li><button>4.19 Superficies - Tensiones principales</button></li>
      <li><button>4.20 Superficies - Otras tensiones</button></li>
      <li><button disabled>4.21 Superficies - Tensiones de contacto</button></li>
      <li><button>4.22 Superficies - Tensiones equivalentes - von Mises</button></li>
      <li><button>4.23 Superficies - Tensiones equivalentes - Tresca</button></li>
      <li><button>4.24 Superficies - Tensiones equivalentes - Rankine</button></li>
      <li><button>4.25 Superficies - Tensiones equivalentes - Bach</button></li>
      <li><button>4.26 Superficies - Deformaciones básicas</button></li>
      <li><button>4.27 Superficies - Deformaciones principales</button></li>
      <li><button>4.28 Superficies - Deformaciones máximas</button></li>
      <li><button>4.29 Superficies - Deformaciones - von Mises</button></li>
      <li><button>4.30 Superficies - Deformaciones - Tresca</button></li>
      <li><button>4.31 Superficies - Deformaciones - Rankine</button></li>
      <li><button>4.32 Superficies - Deformaciones - Bach</button></li>
      <li><button>4.33 Superficies - Deformaciones plásticas</button></li>
      <li><button disabled>4.34 Superficies - Deformaciones de rotura</button></li>
      <li><button>4.35 Superficies - Criterio</button></li>
      <li><button disabled>4.36 Sólidos - Deformaciones</button></li>
      <li><button disabled>4.37 Sólidos - Tensiones</button></li>
      <li><button disabled>4.38 Sólidos - Deformaciones</button></li>
      <li><button disabled>4.39 Sólidos - Deformaciones plásticas</button></li>
      <li><button disabled>4.40 Sólidos - Criterio</button></li>
      <li><button disabled>4.41 Sólidos - Presión del gas</button></li>
      <li><button disabled>4.42 Sólidos - Tensión en el centro de gravedad de EF</button></li>
      <li><button disabled>4.43 Sólidos - Deformación en el centro de gravedad de EF</button></li>
      <li><button disabled>4.44 Sólido - Centro de presión del gas</button></li>
      <li><button disabled>4.45 Articulaciones lineales - Deformaciones</button></li>
      <li><button disabled>4.46 Articulaciones lineales - Fuerzas</button></li>
      <li><button disabled>4.47 Articulaciones en barra - Deformaciones</button></li>
      <li><button disabled>4.48 Articulaciones en barra - Fuerzas</button></li>
      <li><button disabled>4.49 Liberaciones de nudos - Deformaciones</button></li>
      <li><button disabled>4.50 Liberaciones de nudos - Fuerzas</button></li>
      <li><button>4.51 Liberaciones de líneas - Deformaciones</button></li>
      <li><button class="cur"><svg><path d="M5 8l3 5 4-11" fill="none" stroke="#1c2c8c" stroke-width="1.800"/></svg>4.52 Liberaciones de líneas - Fuerzas</button></li>
    </ul>
  </div>
  <div class="mark results"></div>
</div>
</body>
</html>
```
FILE: styles.css
```css
* { box-sizing: border-box; }
body { margin: 0; background: #d0d4dd; color: #000; font: 11px/14px "Noto Sans", "Open Sans", sans-serif; overflow: hidden; }
h1, h2, p, ul { margin: 0; padding: 0; font-size: inherit; font-weight: normal; }
ul { list-style: none; }
button { margin: 0; padding: 0; border: 0; background: none; font: inherit; color: inherit; }
a { color: inherit; text-decoration: none; }
svg { flex: none; width: 16px; height: 16px; overflow: visible; }
.defs { position: absolute; width: 0; height: 0; }
.k { fill: none; stroke: #444; }
.dim { opacity: .6; }

.app { position: relative; display: grid; grid-template-rows: 23px 24px auto 1fr 21px; height: 100vh; overflow: hidden; }

.title { display: flex; align-items: center; gap: 6px; padding: 1px 0 0 2px; background: #fff; }
.menu { display: flex; align-items: center; gap: 15px; color: #444b5c; }
.menu .grip { margin-right: -15px; }
.menu .i { margin-right: -5px; height: 14px; }

.barrow { display: flex; height: 26px; padding-bottom: 1px; gap: 1px; }
.bar { display: flex; align-items: center; height: 25px; padding-right: 1px; background: linear-gradient(#eaeef7 30%, #d2d7e1); border-radius: 0 3px 3px 0; }
.barrow .bar { padding-top: 2px; border-bottom: 1px solid #a9adb9; }
.grip { flex: none; width: 10px; height: 16px; background: repeating-linear-gradient(#9aa0ad 0 2px, transparent 2px 4px) 4px 1px / 2px 14px no-repeat; }
.bar button { display: flex; align-items: center; justify-content: center; flex: none; width: 22px; height: 22px; }
.bar .on { border: 1px solid #c29a5c; border-radius: 2px; background: linear-gradient(#fcd9a4, #ffb55a 55%, #ffe3a0); }
.bar .dd { width: 13px; }
.dd::before { content: ""; border: 4px solid transparent; border-top-color: #707683; border-bottom: 0; }
.sep { flex: none; width: 8px; height: 15px; background: linear-gradient(#a8adb9, #a8adb9) 3px 0 / 1px 15px no-repeat, linear-gradient(#fff, #fff) 4px 0 / 1px 15px no-repeat; }
.combo { position: relative; display: flex; width: 134px; height: 19px; background: #fff; }
.combo.wide { width: 216px; margin: 0 2px; }
.combo::after { content: ""; position: absolute; right: 1px; top: 1px; width: 14px; height: 17px; background: #dde1ea; pointer-events: none; clip-path: polygon(0 0, 100% 0, 100% 100%, 0 100%, 0 0, 4px 7px, 7px 11px, 11px 7px, 4px 7px); }
.combo::before { content: ""; position: absolute; right: 4px; top: 7px; width: 8px; height: 5px; background: #8a909c; }
select { appearance: none; width: 100%; border: 0; padding: 0 4px; background: none; font: inherit; color: #000; }

main { display: grid; grid-template-columns: 419px minmax(0, 1fr); min-height: 0; gap: 4px; }
.nav { display: grid; grid-template-rows: 20px minmax(0, 1fr) 24px; min-height: 0; }
.nav h2 { display: flex; align-items: center; justify-content: space-between; padding: 0 3px 0 4px; background: #e6eaf3; color: #3a4150; }
.tools { display: flex; gap: 4px; }
.tools svg { width: 12px; height: 12px; }
.treebox { position: relative; display: flex; justify-content: space-between; border: 1px solid #9aa0ad; border-bottom-width: 2px; padding: 2px 2px 0; background: #fbfbf4; box-shadow: inset 2px 0 #e6eaf3; overflow: hidden; min-height: 0; }
.tree { padding-left: 2px; }
.tree li { padding-left: 19px; background: repeating-linear-gradient(#777 0 1px, transparent 1px 2px) 9px 0 / 1px 100% no-repeat; }
.tree li:last-child { background-size: 1px 10px; }
.tree label { display: flex; align-items: center; height: 18px; padding-left: 3px; background: repeating-linear-gradient(90deg, #777 0 1px, transparent 1px 2px) 0 10px / 4px 1px no-repeat; white-space: nowrap; }
.tree label:first-child { margin-left: -9px; padding-left: 12px; background-size: 12px 1px; }
.tree label svg { margin: 0 5px 0 2px; }
.tree label span { line-height: 18px; }
sub { font-size: 10px; line-height: 1px; vertical-align: -2px; margin-left: 1px; }
.ex { float: left; width: 9px; height: 9px; margin: 6px 0 0 -14px; border: 1px solid #8b93a5; border-radius: 1px; background: linear-gradient(#2c4c98, #2c4c98) center / 5px 1px no-repeat #f4f6fa; }
.ex.plus { background: linear-gradient(#2c4c98, #2c4c98) center / 5px 1px no-repeat, linear-gradient(#2c4c98, #2c4c98) center / 1px 5px no-repeat #f4f6fa; }
.tree input { appearance: none; flex: none; display: grid; place-items: center; width: 13px; height: 13px; margin: 0; border: 1px solid #3c4048; background: linear-gradient(135deg, #fff, #cfd4e2); }
.tree input[type=radio] { border-radius: 50%; }
.tree input[type=radio]:checked::before { content: ""; width: 5px; height: 5px; border-radius: 50%; background: #111; }
.tree input[type=checkbox]:checked::before { content: ""; width: 9px; height: 9px; background: #111; clip-path: polygon(8% 45%, 25% 40%, 40% 62%, 85% 8%, 100% 22%, 42% 95%); }
.tree .mixed::before { content: ""; width: 7px; height: 7px; background: #969696; }
.scroll { display: flex; flex-direction: column; flex: none; width: 15px; background: #f0f0f0; }
.scroll i { flex: 1; margin-top: 161px; background: #cdcdcd; }
.c { fill: none; stroke: #505050; stroke-width: 2; }
.mark { position: absolute; border: 2px solid #7fd13b; filter: drop-shadow(5px 5px 2px rgba(0, 0, 0, .45)); pointer-events: none; }
.nodes { left: 5px; top: 519px; width: 252px; height: 246px; }
.navtabs { display: flex; align-items: center; padding-left: 6px; color: #3f4657; background: #d6dae4; border-bottom: 1px solid #a0a4b0; }
.navtabs button { display: flex; align-items: center; gap: 3px; margin-right: 11px; height: 20px; }
.navtabs .sel { margin: 0; padding: 0 3px; border: 2px solid #bfe6e8; border-top: 0; border-radius: 0 0 4px 4px; background: #f4f6fa; }

.work { display: grid; grid-template-rows: minmax(0, 1fr) 19px 25px auto 17px 19px; min-height: 0; background: #f0f0f0; }
.view { position: relative; display: grid; margin-bottom: 7px; border: 2px solid #6c6c6c; border-width: 2px 0 0 2px; background: #fcfcfc; overflow: hidden; box-shadow: 0 7px #d0d4dd; }
.scene { grid-area: 1 / 1; width: 100%; height: 100%; overflow: hidden; shape-rendering: crispEdges; }
.info { grid-area: 1 / 1; display: flex; flex-direction: column; justify-content: space-between; padding: 5px 4px; }
.info, .gridbox, .sheets, footer, .axis text { font-family: "Liberation Sans", Arial, sans-serif; font-size: 11px; }
.mesh { fill: none; stroke: #a8a39c; stroke-dasharray: 1 1; }
.edge { fill: none; stroke: #1c1208; }
.axis { fill: none; stroke-width: 2; shape-rendering: auto; }
.work h2 { padding-left: 3px; background: #b9c0cb; color: #3a4150; line-height: 19px; }
.tablebar { padding-left: 8px; border-radius: 0; }
.tablebar .combo { margin-left: 3px; }
.gridbox { padding: 2px 0 12px 3px; border: 1px solid #6c6c6c; border-right: 0; }
table { width: 100%; border-collapse: collapse; table-layout: fixed; }
.c0 { width: 45px; } .c1 { width: 66px; } .c2 { width: 72px; } .c3 { width: 84px; } .c4 { width: 96px; }
td, th { padding: 0 4px; border: 1px solid #9a9a9a; font-weight: normal; height: 16px; overflow: hidden; }
td { background: #ffffbf; text-align: right; line-height: 15px; }
td:last-child { background: #f0f0f0; }
td.mid { text-align: center; }
.letters th { height: 14px; line-height: 13px; background: #e0e0e0; box-shadow: inset 1px 1px #fff; }
.letters .cur { background: #0078d7; color: #fff; box-shadow: none; }
.letters .corner { padding: 0; white-space: nowrap; box-shadow: none; text-indent: -3px; }
.letters .fill { box-shadow: none; }
.names th { padding: 0; line-height: 16px; border-bottom-color: #9a9a9a; }
.names th[colspan] { border-bottom: 0; }
.names.subs th { border-top: 0; }
tbody th { background: #e0e0e0; box-shadow: inset 1px 1px #fff, inset -1px -1px #a0a0a0; }
.last td:not(:last-child) { background-color: #ebebaf; }
td.n { background-image: linear-gradient(#a8acb8, #a8acb8), linear-gradient(#d9e4ff, #d9e4ff); background-size: 1px 11px, var(--v) 11px; background-position: 41px 2px, 42px 2px; background-repeat: no-repeat; }
td.neg { background-image: linear-gradient(#d8b0a8, #d8b0a8), linear-gradient(#ffbfbf, #ffbfbf); background-position: 41px 2px, calc(41px - var(--v)) 2px; }
td.vy { background-image: linear-gradient(#b8b8a0, #b8b8a0); background-size: 1px 11px; background-position: 33px 2px; background-repeat: no-repeat; }
td.vz { background-image: linear-gradient(#a8acb8, #a8acb8), linear-gradient(#d9e4ff, #d9e4ff); background-size: 1px 11px, 72px 11px; background-position: 5px 2px, 6px 2px; background-repeat: no-repeat; }
.sheets { display: flex; padding-left: 2px; overflow: hidden; }
.sheets button { flex: none; padding: 0 1px; border: 1px solid #6c6c6c; border-width: 1px 1px 1px 0; background: #ececec; }

footer { display: flex; align-items: center; justify-content: space-between; border-top: 1px solid #989ca8; background: linear-gradient(#d4d8e0, #a9aeb9 45%, #a9aeb9 75%, #c0c4cd); color: #2c323e; }
footer p { padding-left: 3px; }
.modes { display: flex; gap: 2px; margin-right: 396px; }
.modes span { padding: 0 1px; border: 1px solid; border-color: #222 #fff #fff #222; line-height: 17px; }
.modes .up { border-color: #fff #888 #888 #fff; }
.modes i { width: 102px; border: 1px solid #8f949f; border-width: 0 1px; }

.popup { position: absolute; top: 0; right: 0; width: 368px; height: 1159px; padding: 3px 1px 0; border: 1px solid #8c8c8c; background: #fafafa; overflow: hidden; }
.more { display: grid; place-items: center; width: 100%; height: 14px; border: 1px solid #8c8c8c; background: linear-gradient(#f8f8f8, #bcbcbc); }
.more::before { content: ""; border: 3px solid transparent; border-bottom-color: #666; border-top: 0; }
.popup ul { background: linear-gradient(90deg, #e9eef7 24px, #bfc2ca 24px 25px, transparent 25px); }
.popup li button { display: block; position: relative; width: 100%; height: 22px; padding-left: 30px; text-align: left; white-space: nowrap; color: #33373f; }
.popup li button:disabled { color: #a3a3a3; }
.popup li .cur { border: 1px solid #dfc27a; background: linear-gradient(#fffbe0, #ffe58e 50%, #ffd23c 55%, #ffe27a); padding-left: 29px; }
.cur svg { position: absolute; left: 1px; top: 0; width: 20px; height: 20px; border: 1px solid #e8963c; background: #ffdf8e; }
.results { right: 79px; top: 985px; width: 290px; height: 190px; }
```
